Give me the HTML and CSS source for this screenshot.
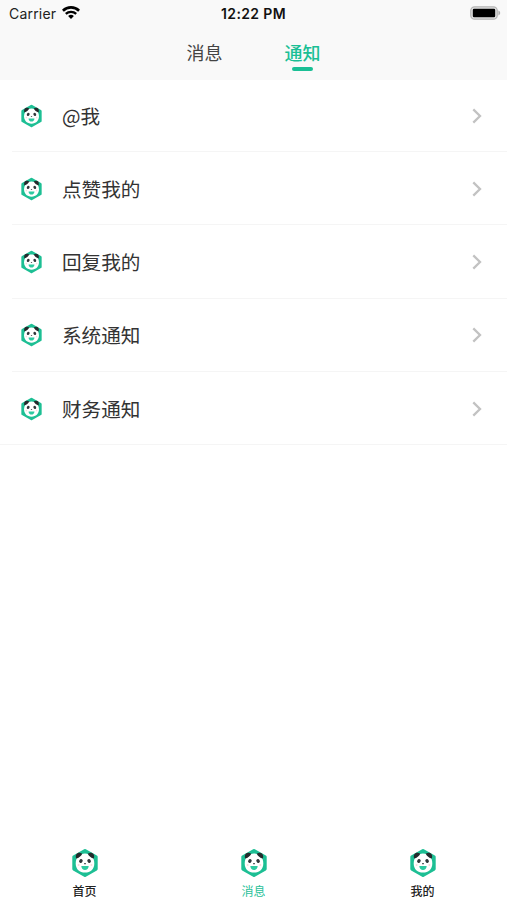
FILE: index.html
```html
<!DOCTYPE html>
<html lang="zh-CN">
<head>
<meta charset="utf-8">
<title>通知</title>
<link rel="stylesheet" href="styles.css">
</head>
<body>
<svg class="defs" aria-hidden="true">
  <symbol id="panda" viewBox="0 0 28 30">
    <path d="M14 2.700 25 8.900v12.200L14 27.300 3 21.100V8.900Z" fill="#1dbf94" stroke="#1dbf94" stroke-width="3.400" stroke-linejoin="round"/>
    <path d="M14 5.600c5.600 0 9.300 4.100 9.300 9.800S19.400 24.600 14 24.600 4.700 21.100 4.700 15.400 8.400 5.600 14 5.600Z" fill="#fff"/>
    <path d="M5.200 10.600C3.600 6.200 7 3.200 11.300 5.700 10 8.200 8 9.800 5.200 10.600ZM22.800 10.600C24.400 6.200 21 3.200 16.700 5.700 18 8.200 20 9.800 22.800 10.600Z" fill="#242a2c"/>
    <ellipse cx="9.900" cy="13" rx="1.700" ry="2.100" fill="#30363a" transform="rotate(28 9.900 13)"/>
    <ellipse cx="18.100" cy="13" rx="1.700" ry="2.100" fill="#30363a" transform="rotate(-28 18.100 13)"/>
    <ellipse cx="14" cy="15.700" rx="1" ry=".6" fill="#30363a"/>
    <circle cx="7.600" cy="17" r="1" fill="#fbdada"/>
    <circle cx="20.400" cy="17" r="1" fill="#fbdada"/>
    <path d="M10.300 18h7.400c-.2 2.700-1.700 3.900-3.700 3.900s-3.500-1.200-3.700-3.900Z" fill="#2ccaa0"/>
  </symbol>
  <symbol id="chevron" viewBox="0 0 10 16">
    <path d="m1.300 1.400 6.700 6.600-6.700 6.600" fill="none" stroke="#c2c2c2" stroke-width="2.300"/>
  </symbol>
</svg>
<div class="app">
  <header class="header">
    <div class="status">
      <div class="carrier">
        <span>Carrier</span>
        <svg class="wifi" viewBox="0 0 18 13">
          <path d="M.9 4.700a11.600 11.600 0 0 1 16.200 0" fill="none" stroke="#000" stroke-width="2.700"/>
          <path d="M3.800 7.900a7.500 7.500 0 0 1 10.400 0" fill="none" stroke="#000" stroke-width="2.300"/>
          <path d="m9 13-2.900-2.900a4.200 4.200 0 0 1 5.800 0Z"/>
        </svg>
      </div>
      <div class="clock">12:22 PM</div>
      <svg class="battery" viewBox="0 0 31 14">
        <rect x=".8" y=".8" width="26.400" height="12.400" rx="3.800" fill="#e4e4e4" stroke="#b5b5b5" stroke-width="1.300"/>
        <rect x="2.800" y="2.700" width="22.400" height="8.600" rx="1.300"/>
        <path d="M28.400 4.600c2.400.8 2.400 4 0 4.800Z" fill="#b0b0b0"/>
      </svg>
    </div>
    <nav class="tabs">
      <div class="tab">消息</div>
      <div class="tab selected">通知</div>
    </nav>
  </header>
  <main class="list">
    <div class="row"><svg class="avatar"><use href="#panda"/></svg><span class="label">@我</span><svg class="chevron"><use href="#chevron"/></svg></div>
    <div class="row"><svg class="avatar"><use href="#panda"/></svg><span class="label">点赞我的</span><svg class="chevron"><use href="#chevron"/></svg></div>
    <div class="row"><svg class="avatar"><use href="#panda"/></svg><span class="label">回复我的</span><svg class="chevron"><use href="#chevron"/></svg></div>
    <div class="row"><svg class="avatar"><use href="#panda"/></svg><span class="label">系统通知</span><svg class="chevron"><use href="#chevron"/></svg></div>
    <div class="row"><svg class="avatar"><use href="#panda"/></svg><span class="label">财务通知</span><svg class="chevron"><use href="#chevron"/></svg></div>
  </main>
  <footer class="tabbar">
    <div class="item"><svg class="item-icon"><use href="#panda"/></svg><span>首页</span></div>
    <div class="item active"><svg class="item-icon"><use href="#panda"/></svg><span>消息</span></div>
    <div class="item"><svg class="item-icon"><use href="#panda"/></svg><span>我的</span></div>
  </footer>
</div>
</body>
</html>
```
FILE: styles.css
```css
* { box-sizing: border-box; }
body {
  margin: 0;
  background: #fff;
  color: #333;
  font-family: "Noto Sans CJK SC", sans-serif;
}
.defs { display: block; width: 0; height: 0; }
.app { display: flex; flex-direction: column; height: 900px; }
.header { height: 80px; background: #f9f9f9; }
.status {
  display: grid;
  grid-template-columns: 1fr auto 1fr;
  grid-template-rows: 27px;
  align-items: center;
  height: 27px;
  padding: 0 6px 0 9px;
  font: 14px/27px Inter, sans-serif;
  color: #222;
}
.carrier { display: flex; align-items: center; gap: 6px; letter-spacing: .2px; }
.wifi { width: 18px; height: 13px; margin-bottom: 2px; }
.clock { font-weight: 600; font-size: 14px; color: #111; letter-spacing: .35px; margin-right: 3px; }
.battery { width: 31px; height: 14px; margin-bottom: 1px; justify-self: end; }
.tabs { display: flex; justify-content: center; gap: 62px; }
.tab { width: 36px; font-size: 18px; line-height: 50px; white-space: nowrap; color: #444; }
.selected { color: #1abf95; font-weight: 500; }
.selected::after {
  content: "";
  display: block;
  width: 21px;
  height: 4px;
  margin: -10px auto 0;
  border-radius: 2px;
  background: #1abf95;
}
.list { flex: 1; }
.row {
  display: flex;
  align-items: center;
  height: 73.300px;
  padding: 0 25px 0 20px;
  background: linear-gradient(#f5f5f5, #f5f5f5) 12px 100% / 100% 1px no-repeat;
}
.row:first-child { height: 72px; }
.row:last-child { background-position: 0 100%; }
.avatar { width: 23px; height: 24px; }
.label { flex: 1; margin: 0 0 0 19px; font-size: 19.600px; line-height: 30px; }
.chevron { width: 10px; height: 16px; }
.tabbar { display: flex; height: 54px; }
.item {
  flex: 1;
  display: flex;
  flex-direction: column;
  align-items: center;
  padding-top: 2px;
  font-size: 12px;
  font-weight: 500;
  line-height: 18px;
  color: #222;
}
.item-icon { width: 28px; height: 30px; margin-bottom: 4px; }
.active { color: #2abf99; font-weight: 400; }
```
